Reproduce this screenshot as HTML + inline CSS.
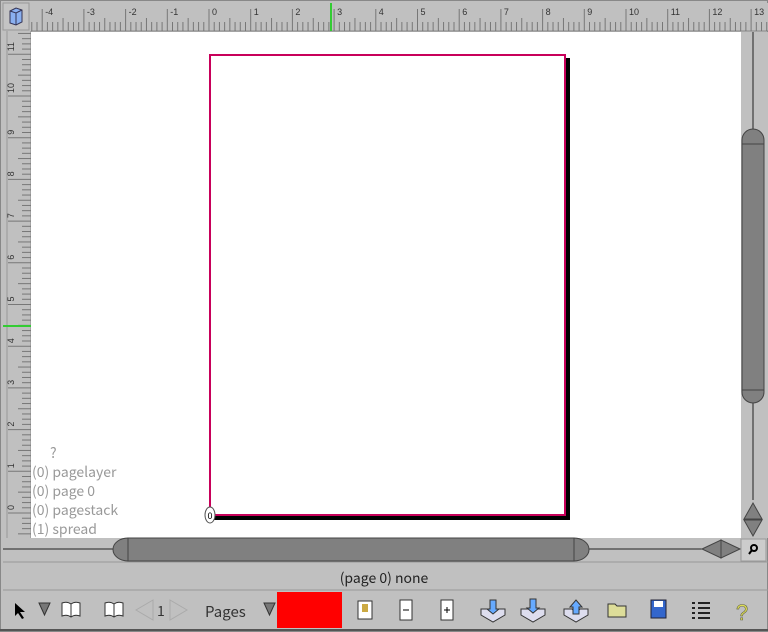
<!DOCTYPE html><html><head><style>
body{margin:0;width:768px;height:632px;background:#c0c0c0;position:relative;overflow:hidden;font-family:"Noto Sans CJK JP","Liberation Sans",sans-serif}
.a{position:absolute}
.lbl{font-size:14px;color:#999;left:32px;line-height:19px}
</style></head><body>
<div class="a" style="left:0;top:0;width:768px;height:632px;border:1px solid #888;box-sizing:border-box"></div>
<svg class="a" style="left:0;top:0" width="768" height="632" id="s">
<rect x="3" y="3" width="26" height="27" fill="#c4c4c4" stroke="#999"/>
<path d="M10 11 l6-3 l6 2 v12 l-6 3 l-6-2z" fill="#8ab0f0" stroke="#335" stroke-width="1"/>
<path d="M10 11 l6 2 l6-3 M16 13 v12" stroke="#335" fill="none"/>
<rect x="31" y="3" width="737" height="28" fill="#c0c0c0"/>
<rect x="3" y="31" width="28" height="507" fill="#c0c0c0"/>
<line x1="31" y1="31" x2="768" y2="31" stroke="#888"/>
<line x1="31" y1="31" x2="31" y2="538" stroke="#888"/>
<line x1="7" y1="31" x2="7" y2="538" stroke="#999"/>
<g id="rt" stroke="#777" font-size="9" fill="#333" font-family="Liberation Sans"></g>
<rect x="31" y="32" width="710" height="506" fill="#fff"/>
<rect x="213" y="58" width="357" height="462" fill="#000"/>
<rect x="210" y="55" width="355" height="460" fill="#fff" stroke="#c8005a" stroke-width="2"/>
<ellipse cx="210" cy="515" rx="5" ry="8" fill="#fff" stroke="#555"/>
<text x="210" y="519" font-size="9" text-anchor="middle" fill="#000">0</text>
<line x1="331" y1="3" x2="331" y2="31" stroke="#3c3" stroke-width="2"/>
<line x1="3" y1="326" x2="31" y2="326" stroke="#3c3" stroke-width="2"/>
<rect x="741" y="32" width="27" height="506" fill="#c0c0c0"/>
<line x1="753" y1="32" x2="753" y2="500" stroke="#222"/>
<path d="M742 140 a11 11 0 0 1 22 0 v252 a11 11 0 0 1 -22 0z" fill="#808080" stroke="#444"/>
<line x1="742" y1="144" x2="764" y2="144" stroke="#444"/>
<line x1="742" y1="390" x2="764" y2="390" stroke="#444"/>
<path d="M744 519 l9-16 l9 16z M744 520 l9 16 l9-16z" fill="#808080" stroke="#444"/>
<rect x="3" y="538" width="738" height="24" fill="#c0c0c0"/>
<line x1="3" y1="549" x2="741" y2="549" stroke="#222"/>
<path d="M128 538 h446 a15 11.5 0 0 1 0 23 h-446 a15 11.5 0 0 1 0-23z" fill="#808080" stroke="#444"/>
<line x1="128" y1="538" x2="128" y2="561" stroke="#444"/>
<line x1="574" y1="538" x2="574" y2="561" stroke="#444"/>
<path d="M702 549 l19-9 v18z M740 549 l-19-9 v18z" fill="#808080" stroke="#444"/>
<rect x="741" y="539" width="25" height="22" fill="#ccc" stroke="#999"/>
<circle cx="754" cy="548" r="3" fill="none" stroke="#000" stroke-width="2"/><line x1="752" y1="550" x2="749" y2="554" stroke="#000" stroke-width="2"/>
<line x1="3" y1="562" x2="768" y2="562" stroke="#999"/>
<line x1="3" y1="590" x2="768" y2="590" stroke="#999"/>
<line x1="0" y1="630" x2="768" y2="630" stroke="#555" stroke-width="2"/>
<path d="M15 603 v13 l3-3 l4 6 l2-1 l-4-6 h5z" fill="#000"/>
<path d="M39 603 h11 l-5.5 12z" fill="#777" stroke="#333"/>
<path d="M62 603 q5-2 9 1 q4-3 9-1 v13 q-5-2 -9 1 q-4-3 -9-1z M71 604 v13" fill="#fff" stroke="#333"/>
<path d="M105 603 q5-2 9 1 q4-3 9-1 v13 q-5-2 -9 1 q-4-3 -9-1z M114 604 v13" fill="#fff" stroke="#333"/>
<path d="M153 600 l-17 10 l17 10z M170 600 l17 10 l-17 10z" fill="none" stroke="#aaa"/>
<path d="M264 603 h11 l-5.5 12z" fill="#777" stroke="#333"/>
<rect x="277" y="592" width="65" height="36" fill="#f00"/>
<rect x="358" y="601" width="14" height="18" fill="#fff" stroke="#333"/><rect x="362" y="604" width="6" height="8" fill="#ca4"/>
<rect x="400" y="600" width="12" height="20" fill="#fff" stroke="#333"/><line x1="403" y1="610" x2="409" y2="610" stroke="#000"/>
<rect x="441" y="600" width="12" height="20" fill="#fff" stroke="#333"/><path d="M444 610 h6 M447 607 v6" stroke="#000"/>
<g fill="#dde" stroke="#333"><path d="M481 609 h8 l4 4 l4-4 h8 v6 l-12 7 l-12-7z"/><path d="M521 609 h8 l4 4 l4-4 h8 v6 l-12 7 l-12-7z"/><path d="M564 609 h8 l4 4 l4-4 h8 v6 l-12 7 l-12-7z"/></g>
<path d="M490 600 v9 h-3 l6 5 l6-5 h-3 v-9z M530 599 v9 h-3 l6 5 l6-5 h-3 v-9z" fill="#6af" stroke="#333"/>
<path d="M573 614 v-7 h-3 l6-7 l6 7 h-3 v7z" fill="#6af" stroke="#333"/>
<path d="M608 604 h7 l2 2 h9 v11 h-18z" fill="#dd9" stroke="#333"/>
<rect x="651" y="600" width="15" height="18" fill="#36c" stroke="#223"/><rect x="654" y="601" width="9" height="6" fill="#fff"/>
<g stroke="#222" stroke-width="2"><path d="M692 603 h3 M698 603 h12 M692 608 h3 M698 608 h12 M692 613 h3 M698 613 h12 M692 618 h3 M698 618 h12"/></g>
<text x="742" y="620" font-size="22" fill="#dd5" stroke="#664" stroke-width=".6" text-anchor="middle" font-family="Liberation Sans">?</text>
</svg>
<div class="a" style="left:0;width:768px;top:568px;text-align:center;font-size:14px;color:#222">(page 0) none</div>
<div class="a" style="left:157px;top:601px;font-size:14px;color:#333">1</div>
<div class="a" style="left:205px;top:601px;font-size:15px;color:#333">Pages</div>
<div class="a lbl" style="left:50px;top:444px">?</div>
<div class="a lbl" style="top:463px">(0) pagelayer</div>
<div class="a lbl" style="top:482px">(0) page 0</div>
<div class="a lbl" style="top:501px">(0) pagestack</div>
<div class="a lbl" style="top:520px">(1) spread</div>
<script>
var g=document.getElementById('rt'),h='',u=41.7;
for(var k=-5;k<=14;k++){var x=209+k*u;
 if(x>31&&x<768){h+='<line x1="'+x+'" y1="9" x2="'+x+'" y2="31"/><text stroke="none" x="'+(x+3)+'" y="15">'+k+'</text>';}
 for(var j=1;j<8;j++){var xx=x+j*u/8;if(xx>31&&xx<768)h+='<line x1="'+xx+'" y1="'+(j==4?18:22)+'" x2="'+xx+'" y2="31"/>';}}
for(var k=-1;k<=12;k++){var y=513-k*u;
 if(y>31&&y<538){h+='<line x1="8" y1="'+y+'" x2="31" y2="'+y+'"/><text stroke="none" transform="translate(14,'+(y-3)+') rotate(-90)">'+k+'</text>';}
 for(var j=1;j<8;j++){var yy=y-j*u/8;if(yy>31&&yy<538)h+='<line x1="'+(j==4?18:22)+'" y1="'+yy+'" x2="31" y2="'+yy+'"/>';}}
g.innerHTML=h;
</script>
</body></html>
